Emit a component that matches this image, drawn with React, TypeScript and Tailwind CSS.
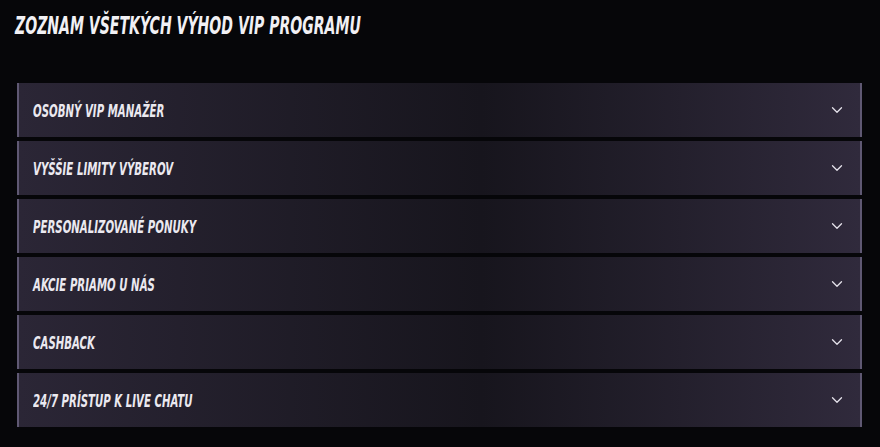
import { ChevronDown } from "lucide-react";

const benefits = [
  "Osobný VIP manažér",
  "Vyššie limity výberov",
  "Personalizované ponuky",
  "Akcie priamo u nás",
  "Cashback",
  "24/7 prístup k live chatu",
];

const font = { fontFamily: '"DejaVu Sans Condensed", "Liberation Sans", sans-serif' };

export default function App() {
  return (
    <div className="min-h-[447px] w-full bg-[#060609] px-[15px] pt-[12px] pb-4" style={font}>
      <h2 className="whitespace-nowrap text-[25px] font-bold italic uppercase leading-[28px] text-[#f1f0f4]">
        <span className="inline-block origin-left scale-x-[0.625]">Zoznam všetkých výhod VIP programu</span>
      </h2>
      <div className="mt-[43px] ml-[2px] mr-[3px] flex flex-col gap-[4px]">
        {benefits.map((b) => (
          <div
            key={b}
            className="flex h-[54px] items-center justify-between border-x-2 border-x-[#5f5873] bg-gradient-to-r from-[#2b2636] via-[#17151d] via-55% to-[#302a3c] pl-[14px] pr-[14px]"
          >
            <span className="inline-block origin-left scale-x-[0.63] whitespace-nowrap text-[18px] font-bold italic uppercase text-[#ebe9f0]">
              {b}
            </span>
            <ChevronDown className="h-[18px] w-[18px] text-[#e4e1ea]" strokeWidth={1.75} />
          </div>
        ))}
      </div>
    </div>
  );
}
